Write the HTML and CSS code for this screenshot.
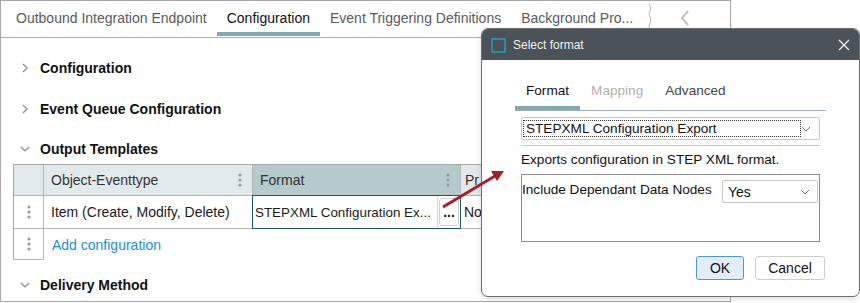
FILE: index.html
```html
<!DOCTYPE html>
<html lang="en">
<head>
    <meta charset="UTF-8">
    <title>Select format</title>
    <link rel="stylesheet" href="styles.css">
</head>
<body>

<div class="panel">
    <div class="tabs">
        <span class="tab">Outbound Integration Endpoint</span>
        <span class="tab active">Configuration</span>
        <span class="tab">Event Triggering Definitions</span>
        <span class="tab">Background Pro...</span>
        <svg class="wave" width="6" height="26" viewBox="0 0 6 26"><path d="M2 0 Q5 4 3 7 Q1 10 3 13 Q5 16 3 19 Q1 22 3 26" fill="none" stroke="#b5b5b5" stroke-width="1"/></svg>
        <svg class="prev" width="10" height="16" viewBox="0 0 10 16"><polyline points="8,1 2,8 8,15" fill="none" stroke="#c8c8c8" stroke-width="2.4"/></svg>
    </div>

    <div class="sections">
        <div class="section">
            <svg class="chev" width="10" height="10" viewBox="0 0 10 10"><polyline points="3,1 7,5 3,9" fill="none" stroke="#8a8a8a" stroke-width="1.2"/></svg>
            <span>Configuration</span>
        </div>
        <div class="section">
            <svg class="chev" width="10" height="10" viewBox="0 0 10 10"><polyline points="3,1 7,5 3,9" fill="none" stroke="#8a8a8a" stroke-width="1.2"/></svg>
            <span>Event Queue Configuration</span>
        </div>
        <div class="section open">
            <svg class="chev" width="10" height="10" viewBox="0 0 10 10"><polyline points="1,3 5,7 9,3" fill="none" stroke="#8a8a8a" stroke-width="1.2"/></svg>
            <span>Output Templates</span>
        </div>
    </div>

    <div class="grid">
        <div class="cell head handle"></div>
        <div class="cell head">Object-Eventtype
            <svg class="kebab" width="4" height="14" viewBox="0 0 4 14"><circle cx="2" cy="2" r="1.6"/><circle cx="2" cy="7" r="1.6"/><circle cx="2" cy="12" r="1.6"/></svg>
        </div>
        <div class="cell head sorted">Format
            <svg class="kebab" width="4" height="14" viewBox="0 0 4 14"><circle cx="2" cy="2" r="1.6"/><circle cx="2" cy="7" r="1.6"/><circle cx="2" cy="12" r="1.6"/></svg>
        </div>
        <div class="cell head last">Pr</div>

        <div class="cell row handle">
            <svg class="kebab" width="4" height="14" viewBox="0 0 4 14"><circle cx="2" cy="2" r="1.6"/><circle cx="2" cy="7" r="1.6"/><circle cx="2" cy="12" r="1.6"/></svg>
        </div>
        <div class="cell row">Item (Create, Modify, Delete)</div>
        <div class="cell row editing">
            <span class="edit-text">STEPXML Configuration Ex...</span>
            <span class="dots-btn">...</span>
        </div>
        <div class="cell row last">No</div>

        <div class="cell add handle">
            <svg class="kebab" width="4" height="14" viewBox="0 0 4 14"><circle cx="2" cy="2" r="1.6"/><circle cx="2" cy="7" r="1.6"/><circle cx="2" cy="12" r="1.6"/></svg>
        </div>
        <div class="add-link">Add configuration</div>
    </div>

    <div class="section open delivery">
        <svg class="chev" width="10" height="10" viewBox="0 0 10 10"><polyline points="1,3 5,7 9,3" fill="none" stroke="#8a8a8a" stroke-width="1.2"/></svg>
        <span>Delivery Method</span>
    </div>
</div>

<div class="dialog">
    <div class="titlebar">
        <svg class="win-icon" width="15" height="15" viewBox="0 0 15 15"><rect x="1" y="1" width="13" height="13" fill="none" stroke="#1fa5bd" stroke-width="1.4"/></svg>
        <span class="title">Select format</span>
        <svg class="close" width="12" height="12" viewBox="0 0 12 12"><path d="M1 1 L11 11 M11 1 L1 11" stroke="#f0f0f0" stroke-width="1.3"/></svg>
    </div>
    <div class="dlg-body">
        <div class="dlg-tabs">
            <span class="dlg-tab active">Format</span>
            <span class="dlg-tab disabled">Mapping</span>
            <span class="dlg-tab">Advanced</span>
        </div>
        <div class="inner">
            <div class="select wide">
                <span class="focus-text">STEPXML Configuration Export</span>
                <svg class="down" width="10" height="6" viewBox="0 0 10 6"><polyline points="1,1 5,5 9,1" fill="none" stroke="#777" stroke-width="1"/></svg>
            </div>
            <div class="rule"></div>
            <p class="desc">Exports configuration in STEP XML format.</p>
            <div class="params">
                <span class="param-label">Include Dependant Data Nodes</span>
                <div class="select small">
                    <span>Yes</span>
                    <svg class="down" width="10" height="6" viewBox="0 0 10 6"><polyline points="1,1 5,5 9,1" fill="none" stroke="#777" stroke-width="1"/></svg>
                </div>
            </div>
            <div class="buttons">
                <button type="button" class="btn ok">OK</button>
                <button type="button" class="btn">Cancel</button>
            </div>
        </div>
    </div>
</div>

<svg class="arrow" width="860" height="303" viewBox="0 0 860 303">
    <line x1="443" y1="207" x2="495" y2="176" stroke="#a31f2b" stroke-width="3"/>
    <polygon points="504,171 497,181 491,171" fill="#a31f2b"/>
</svg>

</body>
</html>
```

FILE: styles.css
```css
* {
    margin: 0;
    padding: 0;
    box-sizing: border-box;
}

body {
    font-family: 'Liberation Sans', Arial, sans-serif;
    background-color: #fff;
    color: #1a1a1a;
    width: 860px;
    height: 303px;
    overflow: hidden;
    position: relative;
}

.panel {
    width: 731px;
    height: 302px;
    border: 1px solid #a9a9a9;
    overflow: hidden;
}

/* top tab strip */
.tabs {
    display: flex;
    align-items: stretch;
    height: 37px;
    padding-left: 5px;
    border-bottom: 1px solid #9cb3b8;
}

.tab {
    font-size: 14px;
    color: #5a5a5a;
    padding: 9px 10px 0;
    white-space: nowrap;
    border-bottom: 4px solid transparent;
    margin-bottom: 1px;
}

.tab.active {
    color: #111;
    border-bottom-color: #82a8b0;
}

.wave {
    margin: 3px 0 0 4px;
}

.prev {
    margin: 9px 0 0 27px;
}

/* collapsible sections */
.sections {
    margin-top: 9px;
}

.section {
    display: flex;
    align-items: center;
    height: 41px;
    padding-left: 19px;
    font-size: 14px;
    font-weight: bold;
    color: #111;
}

.section .chev {
    margin-right: 10px;
}

.section.open {
    height: 35px;
    align-items: flex-start;
    padding-top: 12px;
    line-height: 17px;
}

.section.open .chev {
    margin-top: 3px;
}

.section.delivery {
    margin-top: 5px;
    height: 41px;
}

/* output templates grid */
.grid {
    display: grid;
    grid-template-columns: 30px 209px 208px 1fr;
    margin-left: 12px;
    border-top: 1px solid #a8a8a8;
    border-left: 1px solid #a8a8a8;
    font-size: 14px;
}

.cell {
    display: flex;
    align-items: center;
    border-right: 1px solid #b5b5b5;
    border-bottom: 1px solid #b5b5b5;
    padding-left: 7px;
    white-space: nowrap;
    overflow: hidden;
}

.cell.head {
    height: 31px;
    background-color: #e2e9eb;
    color: #333;
    justify-content: space-between;
    padding-right: 10px;
}

.cell.head.sorted {
    background-color: #b4cacd;
}

.cell.head.last {
    border-right: none;
    justify-content: flex-start;
    padding-left: 4px;
}

.cell.handle {
    padding-left: 0;
    padding-right: 0;
    justify-content: center;
}

.cell.row {
    height: 33px;
}

.cell.row.last {
    border-right: none;
    padding-left: 3px;
}

.cell.add {
    height: 31px;
}

.kebab {
    fill: #9a9a9a;
}

.cell.editing {
    padding: 1px 1px 1px 0;
    border: 1px solid #1e5866;
    margin-left: -1px;
    align-items: stretch;
    margin-top: -1px;
    height: 34px;
}

.edit-text {
    flex: 1;
    min-width: 0;
    overflow: hidden;
    display: flex;
    align-items: center;
    padding-left: 2px;
    border-right: 1px solid #d8d8d8;
    background-color: #fff;
    font-size: 13.4px;
}

.dots-btn {
    flex: 0 0 20px;
    margin: 1px 0 1px 1px;
    border: 1px solid #cfcfcf;
    border-radius: 3px;
    text-align: center;
    font-weight: bold;
    line-height: 26px;
    font-size: 14px;
    color: #111;
}

.add-link {
    grid-column: 2 / 5;
    display: flex;
    align-items: center;
    padding-left: 8px;
    color: #1b8fd0;
    font-size: 14px;
}

/* dialog */
.dialog {
    position: absolute;
    left: 481px;
    top: 28px;
    width: 379px;
    height: 269px;
    background-color: #fff;
    border: 1px solid #6f6f6f;
    border-radius: 7px;
    overflow: hidden;
    box-shadow: 0 2px 6px rgba(0, 0, 0, 0.15);
}

.titlebar {
    display: flex;
    align-items: center;
    height: 31px;
    background-color: #4b5359;
    padding: 0 9px 0 9px;
}

.win-icon {
    margin-top: 1px;
}

.title {
    flex: 1;
    margin-left: 7px;
    color: #eef0f1;
    font-size: 12px;
}

.dlg-body {
    padding: 12px 33px 0;
    font-size: 13.6px;
}

.dlg-tabs {
    display: flex;
    height: 39px;
    border-bottom: 1px solid #9cb3b8;
}

.dlg-tab {
    padding: 10px 11px 0;
    line-height: 17px;
    font-size: 13.6px;
    color: #444;
    border-bottom: 4px solid transparent;
}

.dlg-tab.active {
    color: #111;
    border-bottom-color: #82a8b0;
}

.dlg-tab.disabled {
    color: #b0b0b0;
}

.inner {
    margin: 0 6px;
}

.select {
    display: flex;
    align-items: center;
    justify-content: space-between;
    border: 1px solid #c8c8c8;
    border-radius: 2px;
    background-color: #fff;
}

.select.wide {
    margin-top: 6px;
    height: 23px;
    padding: 0 8px 0 1px;
}

.focus-text {
    flex: 0 0 278px;
    border: 1px dotted #333;
    line-height: 15px;
    padding-left: 2px;
    color: #111;
}

.rule {
    margin-top: 5px;
    border-top: 1px solid #c8c8c8;
}

.desc {
    margin-top: 5px;
    line-height: 17px;
    color: #111;
}

.params {
    display: flex;
    align-items: flex-start;
    justify-content: space-between;
    margin-top: 6px;
    height: 68px;
    border: 1px solid #8c8c8c;
    padding: 5px 1px 0 0;
}

.param-label {
    line-height: 17px;
    margin-top: 1px;
    color: #111;
}

.select.small {
    width: 96px;
    height: 23px;
    padding: 0 7px 0 5px;
    font-size: 14px;
    color: #111;
}

.buttons {
    display: flex;
    justify-content: flex-end;
    gap: 11px;
    margin-top: 14px;
    margin-right: -5px;
}

.btn {
    height: 24px;
    font-family: 'Liberation Sans', Arial, sans-serif;
    font-size: 14px;
    color: #111;
    background-color: #fff;
    border: 1px solid #cfcfcf;
    border-radius: 3px;
    width: 70px;
}

.btn.ok {
    width: 48px;
    background-color: #e1eefa;
    border-color: #4d96d9;
}

.arrow {
    position: absolute;
    left: 0;
    top: 0;
    pointer-events: none;
}
```
